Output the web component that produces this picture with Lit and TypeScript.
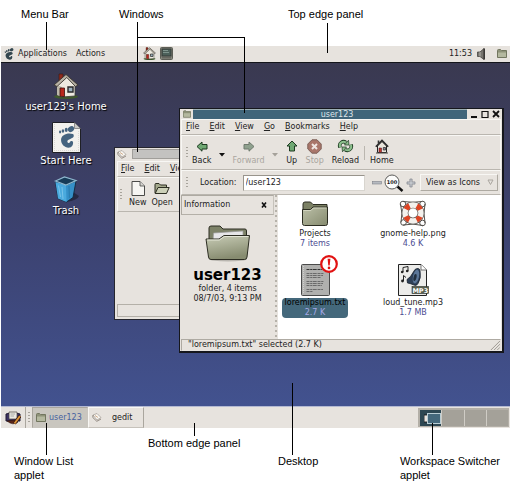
import { LitElement, html, css, nothing } from "lit";
import { customElement, property } from "lit/decorators.js";
import { classMap } from "lit/directives/class-map.js";

const reset = css`
  * { box-sizing: border-box; }
  button, input, select { font: inherit; color: inherit; background: none; border: 0; padding: 0; margin: 0; border-radius: 0; white-space: nowrap; }
  svg { display: block; flex: none; }
  u { text-decoration: underline; text-underline-offset: 1px; }
`;

const foot = (size: number, h: number, fill: string) => html`<svg width=${size} height=${h} viewBox="0 0 20 26">
  <g fill=${fill}>
    <ellipse cx="15.6" cy="3.8" rx="4" ry="3.4" transform="rotate(-30 15.6 3.8)"/>
    <ellipse cx="9.4" cy="5" rx="1.9" ry="2.8" transform="rotate(10 9.4 5)"/>
    <ellipse cx="5.3" cy="6.8" rx="1.6" ry="2.3"/>
    <ellipse cx="2" cy="9" rx="1.3" ry="1.9" transform="rotate(-14 2 9)"/>
    <path d="M17 9.5C11 7.500 2.500 10 2.500 16.500C2.500 21.500 7 25.500 11.500 25.500C16 25.500 17.800 21.500 17 18.500C16.400 17 14 17.300 13.400 18.800C13 20.300 10.700 20.500 10.200 18.500C9.600 15.500 17.800 15 18 11.800C18 10.500 17.700 9.800 17 9.500Z"/>
  </g></svg>`;

const house = (w: number, h: number) => html`<svg width=${w} height=${h} viewBox="0 0 26 26">
  <ellipse cx="13" cy="23.600" rx="12" ry="2.400" fill="#3f5a2c"/>
  <path d="M6 1h4v8H6z" fill="#8e2a1c" stroke="#3a1712" stroke-width=".6"/>
  <path d="M4 11L14 2L22 11V23L9 24L4 22Z" fill="#eeeae0" stroke="#3b3a36" stroke-width=".8"/>
  <path d="M4 12L9 14V24L4 22Z" fill="#bdb8aa"/>
  <path d="M1 12L13 1.500L25 12L22.500 13.500L13.800 4.500L4 13.500Z" fill="#b9b3a6" stroke="#38332e" stroke-width=".9"/>
  <path d="M7 15h4.500v8.600L7 23.300z" fill="#b8271c" stroke="#3b120e" stroke-width=".8"/>
  <path d="M15 14h5v5h-5z" fill="#9bb0bd" stroke="#282828" stroke-width="1.400"/>
</svg>`;

const smallFolder = (w = 10, h = 9) => html`<svg width=${w} height=${h} viewBox="0 0 10 9">
  <path d="M.5 1.500Q.5.5 1.500.5H3.500L4.500 1.500H9.500V8.500H.5Z" fill="#8e9279" stroke="#72765f"/>
  <path d="M1 3.500H9V8H1Z" fill="#b4b89f"/></svg>`;

const folder = html`<svg width="28" height="26" viewBox="0 0 28 26">
  <path d="M2 3Q2 1 4 1H9.500L12 3.500H26V14H2Z" fill="#7b8064" stroke="#2c2d22"/>
  <path d="M1.500 8.500H9.500L12 6H26.500V22.500Q26.500 24.500 24.500 24.500H3.500Q1.500 24.500 1.500 22.500Z" fill="url(#fg)" stroke="#2c2d22"/>
  <path d="M2.500 9.500H10L12.500 7H25.500" fill="none" stroke="#d9dcc8" stroke-width=".8"/>
  <defs><linearGradient id="fg" x1="0" y1="0" x2="1" y2="1"><stop stop-color="#bcc0a8"/><stop offset="1" stop-color="#858a6e"/></linearGradient></defs></svg>`;

const bigFolder = html`<svg width="46" height="37" viewBox="0 0 46 37">
  <ellipse cx="23" cy="34" rx="19" ry="2.500" fill="#b9b6b0"/>
  <path d="M4 3Q4 1 6 1H15L18 4H40Q41.500 4 41.500 6V15H4Z" fill="#7d8268" stroke="#2c2d22"/>
  <path d="M8.500 8L38 6V17H8Z" fill="#e6e6e8" stroke="#9a9a98" stroke-width=".7"/>
  <path d="M1 14H14L19 10.500H44.500L42 32Q41.800 34.500 39.500 34.500H6Q3.800 34.500 3.500 32Z" fill="url(#bg)" stroke="#2c2d22"/>
  <path d="M2.200 15H14.400L19.400 11.500H43.300" fill="none" stroke="#e3e5d6"/>
  <defs><linearGradient id="bg" x1="0" y1="0" x2=".3" y2="1"><stop stop-color="#c8ccb6"/><stop offset="1" stop-color="#878c70"/></linearGradient></defs></svg>`;

const terminal = html`<svg width="13" height="13" viewBox="0 0 13 13">
  <rect x=".5" y=".5" width="12" height="12" rx="1" fill="#85867c" stroke="#5d5e56"/>
  <rect x="2" y="2" width="9" height="7" fill="#4c605a" stroke="#343a37"/>
  <path d="M3 3.500H8M3 5.500H9" stroke="#8ba199" stroke-width=".8"/>
  <path d="M2 10.800H11" stroke="#5a5b55"/></svg>`;

const speaker = html`<svg width="9" height="12" viewBox="0 0 9 12">
  <path d="M.5 4H3L7 .5V11.500L3 8.500H.5Z" fill="#77756f" stroke="#45433f" stroke-width=".8"/>
  <path d="M7.300.5V11.500" stroke="#2e2c2a" stroke-width="1.200"/><path d="M3 4V8.500" stroke="#c9c6bf" stroke-width=".8"/></svg>`;

const startDoc = html`<svg width="29" height="31" viewBox="0 0 29 31">
  <path d="M.5.5H22.500L28.500 6.500V30.500H.5Z" fill="#f3f2ee" stroke="#1f2026"/>
  <path d="M22.500.5V6.500H28.500" fill="#c9c9c6" stroke="#6b6b6b" stroke-width=".7"/>
  <path d="M2.500 2V29.500M26.500 9V29.500M2 28.500H27" stroke="#cfcfca" stroke-width=".7" stroke-dasharray="1 1"/>
  <g transform="translate(7 4) scale(.82 .85)" fill="#45647f">
    <ellipse cx="14.600" cy="3.600" rx="4" ry="3.200" transform="rotate(-30 14.600 3.600)"/><ellipse cx="8.800" cy="4.600" rx="1.800" ry="2.500"/>
    <ellipse cx="4.800" cy="5.800" rx="1.600" ry="2.100"/><ellipse cx="1.300" cy="7" rx="1.300" ry="1.700"/>
    <path d="M17 9.500C11 7.500 2.500 10 2.500 16.500C2.500 21.500 7 25.500 11.500 25.500C16 25.500 17.800 21.500 17 18.500C16.400 17 14 17.300 13.400 18.800C13 20.300 10.700 20.500 10.200 18.500C9.600 15.500 17.800 15 18 11.800C18 10.500 17.700 9.800 17 9.500Z"/></g></svg>`;

const trash = html`<svg width="30" height="27" viewBox="0 0 30 27">
  <path d="M19 14L28 20Q27 24 15 26Z" fill="#1d1f33" opacity=".7"/>
  <path d="M4.500 6L7 22.500L15.500 26L22 21.500L25 5L15 9Z" fill="#3590c8" stroke="#12283c" stroke-width=".9"/>
  <path d="M15 9L15.500 26L7 22.500L4.500 6Z" fill="#4aaade"/>
  <path d="M7.500 9.500L9.500 21M11 11L12 23" stroke="#78c4ea" stroke-width="1"/>
  <path d="M4.500 5L13.500 1L25 4.500L15 9Z" fill="#173c58" stroke="#8fb9cf" stroke-width="1.200"/>
  <path d="M18 10L18.500 22" stroke="#2a7fb3" stroke-width="1.300"/></svg>`;

const pencilPad = html`<svg width="10" height="9" viewBox="0 0 10 9">
  <path d="M1 2L5 .5L9 4.500L5 7Z" fill="#f7f5f0" stroke="#9d978f" stroke-width=".7"/>
  <path d="M1 2L.8 4.500L4.800 8.300L9 6" fill="none" stroke="#7d756c" stroke-width=".8"/><path d="M3 2.500L6 4.500" stroke="#c59a75" stroke-width=".8"/></svg>`;

const arrow = (dim: boolean) => html`<svg width="12" height="11" viewBox="0 0 12 11">
  <path d="M1 5.500L6 1V3.500H11V8H6V10.200Z" transform=${dim ? "matrix(-1 0 0 1 12 0)" : "translate(0 0)"}
    fill=${dim ? "#8fa18e" : "#6fa873"} stroke=${dim ? "#6f7a6e" : "#1d3a20"}/></svg>`;

const upArrow = html`<svg width="12" height="12" viewBox="0 0 12 12"><path d="M6 1L11 6H8.500V11H3.500V6H1Z" fill="#6fa873" stroke="#1d3a20"/></svg>`;

const stop = html`<svg width="15" height="15" viewBox="0 0 15 15">
  <path d="M5 .8H10L14.200 5V10L10 14.200H5L.8 10V5Z" fill="#a9766a" stroke="#7e6159"/><path d="M5 5L10 10M10 5L5 10" stroke="#efe6e2" stroke-width="2"/></svg>`;

const reload = html`<svg width="17" height="14" viewBox="0 0 17 14">
  <g fill="none"><path d="M3 8.500C1.500 3.500 6 1.500 9 3.500" stroke="#1d3a20" stroke-width="3.600"/><path d="M14 5.500C15.500 10.500 11 12.500 8 10.500" stroke="#1d3a20" stroke-width="3.600"/>
  <path d="M3 8.200C1.700 3.500 6 1.500 9 3.500" stroke="#8cc08d" stroke-width="2"/><path d="M14 5.800C15.300 10.500 11 12.500 8 10.500" stroke="#8cc08d" stroke-width="2"/></g>
  <path d="M7.500 6L12 6L11.500 1.200Z" fill="#8cc08d" stroke="#1d3a20" stroke-width=".7"/><path d="M9.500 8L5 8L5.500 12.800Z" fill="#8cc08d" stroke="#1d3a20" stroke-width=".7"/></svg>`;

const homeIcon = html`<svg width="14" height="15" viewBox="0 0 14 15">
  <path d="M2.500 7L7 2.500L11.500 7V13.500H2.500Z" fill="#e9e5dc" stroke="#242424"/>
  <path d="M.8 7.800L7 1.500L13.200 7.800" fill="none" stroke="#2b2b2b" stroke-width="1.600"/><path d="M3.500 1.500V4.500" stroke="#333" stroke-width="1.600"/>
  <path d="M4 9H6.500V13.500H4Z" fill="#c03a26" stroke="#402" stroke-width=".5"/><path d="M8.300 8.500H10.500V11H8.300Z" fill="#889" stroke="#333" stroke-width=".8"/>
  <path d="M1 14H13" stroke="#4a4a42"/></svg>`;

const newDoc = html`<svg width="14" height="15" viewBox="0 0 14 15"><path d="M1 .5H9L13.500 5V14.500H1Z" fill="#f6f5f2" stroke="#4a4a48"/><path d="M9 .5V5H13.500" fill="#d5d4d0" stroke="#4a4a48" stroke-width=".8"/></svg>`;
const openIcon = html`<svg width="16" height="15" viewBox="0 0 16 15"><path d="M1 3.500Q1 2.500 2 2.500H5L6.500 4H12.500V12H1Z" fill="#a4a98c" stroke="#2c2d22"/><path d="M4 6.500H15.200L12.500 12.500H1.200Z" fill="#ccd0b8" stroke="#2c2d22"/></svg>`;

const magnifier = html`<svg width="20" height="18" viewBox="0 0 20 18">
  <path d="M13.500 12.500L18.500 17" stroke="#111" stroke-width="2.400"/><circle cx="8" cy="8" r="7" fill="#fbfbfa" stroke="#5c5c5a"/>
  <text x="8" y="10" text-anchor="middle" font-size="5" font-weight="bold" font-family="DejaVu Sans" fill="#222">100</text></svg>`;
const minus = html`<svg width="10" height="10" viewBox="0 0 10 10"><rect x=".5" y="3.500" width="9" height="2.500" fill="#b6bac0" stroke="#7f838b" stroke-width=".6"/></svg>`;
const plus = html`<svg width="10" height="10" viewBox="0 0 10 10"><path d="M3.900 1H6.100V3.900H9V6.100H6.100V9H3.900V6.100H1V3.900H3.900Z" fill="#c2c6cb" stroke="#7f838b" stroke-width=".7"/></svg>`;

const lifebuoy = html`<svg width="28" height="27" viewBox="0 0 28 27">
  <g fill="none" stroke="#56534e" stroke-width="1"><circle cx="4" cy="4" r="2.800"/><circle cx="23.500" cy="4" r="2.800"/><circle cx="4.500" cy="22.500" r="2.800"/><circle cx="23.500" cy="23" r="2.800"/><path d="M4 1.500Q14 3 23.500 1.500M4 25Q14 23 24 25.500M1.500 4Q4 13 2 22.500M26 4Q24 13 26 23"/></g>
  <circle cx="14" cy="13" r="8" fill="none" stroke="#403c38" stroke-width="6.600"/>
  <circle cx="14" cy="13" r="8" fill="none" stroke="#f3f1ed" stroke-width="5.400"/>
  <circle cx="14" cy="13" r="8" fill="none" stroke="#dd4424" stroke-width="5.400" stroke-dasharray="5 7.566" transform="rotate(27 14 13)"/></svg>`;

const textDoc = html`<svg width="29" height="32" viewBox="0 0 29 32">
  <rect x=".5" y=".5" width="28" height="31" rx="1" fill="#b0b0ae" stroke="#4a4a4a"/><path d="M2.500 2V30" stroke="#cfcfcd" stroke-dasharray="1 1"/>
  <g stroke="#6a6a6a" stroke-dasharray="3 .7 2 .5 4 .8"><path d="M5.500 5.500H21" stroke="#333"/><path d="M5.500 9.500H23M5.500 11.500H22M5.500 13.500H20M5.500 17.500H23M5.500 19.500H22M5.500 21.500H21M5.500 25.500H22M5.500 27.500H12"/></g></svg>`;

const audioDoc = html`<svg width="31" height="32" viewBox="0 0 31 32">
  <path d="M.5.5H23L28.500 6V31.500H.5Z" fill="#ececea" stroke="#222"/><path d="M23 .5V6H28.500" fill="#fff" stroke="#555" stroke-width=".8"/>
  <path d="M5 8V3.500L10 2.500V7" fill="none" stroke="#222"/><circle cx="4.200" cy="8" r="1.300" fill="#222"/><circle cx="9.200" cy="7" r="1.300" fill="#222"/>
  <path d="M5.500 17V11.500L8 13.500" fill="none" stroke="#222"/><circle cx="4.500" cy="17" r="1.400" fill="#222"/>
  <path d="M17 5.500Q21 3 22 6.500Q23.500 14 20 19.500Q18.500 22.500 16 21L12 19.500L9.500 19L9 15.500L12.500 12.500Z" fill="#2e4058" stroke="#17202c" stroke-width=".8"/>
  <ellipse cx="18" cy="12.500" rx="3" ry="7" transform="rotate(12 18 12.500)" fill="#5b7698"/><ellipse cx="17" cy="13.500" rx="1.500" ry="3.500" transform="rotate(12 17 13.500)" fill="#22303f"/>
  <rect x="14" y="22.500" width="16.500" height="7" fill="#5a6150" stroke="#2c3028" stroke-width=".6"/>
  <text x="22.300" y="28.600" text-anchor="middle" font-size="6.500" font-weight="bold" font-family="DejaVu Sans" fill="#fff">MP3</text></svg>`;

const emblem = html`<svg width="18" height="18" viewBox="0 0 18 18"><circle cx="9" cy="9" r="7.800" fill="#fff" stroke="#e11212" stroke-width="2.200"/><path d="M7.600 3.800H10.400L9.700 10.500H8.300Z" fill="#e11212"/><circle cx="9" cy="12.900" r="1.300" fill="#e11212"/></svg>`;

const deskIcon = html`<svg width="16" height="14" viewBox="0 0 16 14">
  <path d="M1 3Q8 0 15 3V10H1Z" fill="#3c3264" stroke="#201a33"/><path d="M4 1H12V8H4Z" fill="#ece9e2" stroke="#4a4640" stroke-width=".7"/><path d="M5.500 3H10M5.500 5H9" stroke="#999" stroke-width=".8"/>
  <path d="M2 10Q8 15 13 11L10 9Z" fill="#5a2418" stroke="#2b120e" stroke-width=".6"/><path d="M15 5L9.500 12.500" stroke="#2b120e" stroke-width="3"/><path d="M15 5L9.500 12.500" stroke="#dc9238" stroke-width="2"/></svg>`;

const windowCss = css`
  .bar { border: 1px solid; border-color: #f8f7f4 #f8f7f4 #bab6af #f8f7f4; display: flex; align-items: center; }
  .grip { flex: none; width: 2px; height: 12px; margin-right: 2px; background: repeating-linear-gradient(#a8a49c 0 1px, transparent 1px 3px); }
  .menus { gap: 10px; height: 16px; padding: 0 4px; }
  .tool { display: flex; flex-direction: column; align-items: center; line-height: 12px; }
  .tool .pic { height: 16px; display: flex; align-items: center; justify-content: center; margin-bottom: 1px; }
  .tool:disabled { color: #aaa69f; }
  .title { display: flex; align-items: stretch; height: 10px; }
  .title .app { width: 12px; display: flex; align-items: center; justify-content: center; }
`;

@customElement("editor-window")
class EditorWindow extends LitElement {
  static styles = [reset, windowCss, css`
    :host { display: flex; flex-direction: column; background: #e7e3de; border: 1px solid #26262e; padding: 1px 0 2px 2px; overflow: hidden; min-height: 173px; }
    .title { margin-bottom: 2px; }
    .title .app { width: 15px; justify-content: flex-start; }
    .fill { flex: 1; background: #c3c2c0; border: 1px solid #a09e9a; }
    .bar { flex: none; }
    .menus { padding: 0 3px; }
    .tools { height: 35px; padding-left: 2px; gap: 5px; }
    .page { flex: 1; }
    .status { height: 13px; border: 1px solid #b4b0a8; }
  `];
  render() {
    return html`
      <div class="title"><span class="app">${pencilPad}</span><span class="fill"></span></div>
      <div class="bar menus"><button><u>F</u>ile</button><button><u>E</u>dit</button><button><u>V</u>iew</button></div>
      <div class="bar tools"><span class="grip"></span>
        <button class="tool"><span class="pic">${newDoc}</span>New</button>
        <button class="tool"><span class="pic">${openIcon}</span>Open</button>
      </div>
      <div class="page"></div>
      <div class="status"></div>`;
  }
}

interface FileItem { name: string; note: string; pic: unknown; selected?: boolean; }

@customElement("file-window")
class FileWindow extends LitElement {
  @property({ attribute: false }) files: FileItem[] = [
    { name: "Projects", note: "7 items", pic: folder },
    { name: "gnome-help.png", note: "4.6 K", pic: lifebuoy },
    { name: "loremipsum.txt", note: "2.7 K", pic: textDoc, selected: true },
    { name: "loud_tune.mp3", note: "1.7 MB", pic: audioDoc },
  ];
  static styles = [reset, windowCss, css`
    :host { display: flex; flex-direction: column; background: #e7e3de; border: 1px solid #16171c; border-right-width: 2px; border-bottom-width: 2px; padding: 0 1px 0 1px; }
    .caption { flex: 1; background: #40657a; border-top: 1px solid #9db0b4; color: #dfe6ea; text-align: center; line-height: 10px; padding-left: 14px; }
    .ctl { width: 11px; display: flex; align-items: center; justify-content: center; }
    .controls { display: flex; padding-left: 1px; }
    .tools { height: 35px; padding-left: 4px; }
    .tools .grip { margin-right: 4px; }
    .drop { width: 21px; height: 24px; display: flex; align-items: center; justify-content: center; padding-top: 4px; }
    .plain { display: flex; gap: 8px; align-items: center; }
    .sep { width: 1px; height: 14px; background: #bab6af; margin: 0 5px; }
    .place { height: 25px; padding: 0 2px 0 4px; }
    .place label { margin: 0 6px 0 10px; }
    .place input { flex: 1; min-width: 40px; height: 16px; background: #fff; border: 1px solid; border-color: #98948c #d8d5cf #d8d5cf #98948c; padding: 0 2px; }
    .zoom { display: flex; align-items: center; gap: 2px; margin: 0 4px 0 7px; }
    .view { position: relative; }
    .view select { appearance: none; width: 78px; height: 17px; padding-left: 5px; border: 1px solid; border-color: #f8f7f4 #aeaaa2 #aeaaa2 #f8f7f4; }
    .view svg { position: absolute; right: 4px; top: 5px; pointer-events: none; }
    .body { display: grid; grid-template-columns: 93px 4px 1fr; min-height: 144px; }
    .info { display: flex; flex-direction: column; align-items: center; line-height: 10px; }
    .head { align-self: stretch; display: flex; justify-content: space-between; align-items: center; height: 20px; padding: 0 6px 0 2px; border: 1px solid; border-color: #aeaaa2 #c6c2bb #b4b0a8 #aeaaa2; margin-bottom: 10px; }
    h1 { font-size: 15px; line-height: 18px; margin: 4px 0 0; color: #000; }
    .split { margin: 0 1px; background: repeating-linear-gradient(#b6b2aa 0 2px, transparent 2px 5px); }
    .files { background: #fff; display: grid; grid-template-columns: repeat(auto-fill, 74px); grid-auto-rows: 54px; gap: 15px 24px; align-content: start; }
    .file { position: relative; display: flex; flex-direction: column; align-items: center; line-height: 10px; }
    .pic34 { height: 34px; display: flex; align-items: flex-end; padding-bottom: 2px; }
    .label { padding: 0 3px; border-radius: 4px; display: flex; flex-direction: column; align-items: center; }
    .note { color: #4c4c92; }
    .selected .label { background: #44687b; color: #000; height: 21px; }
    .selected .note { color: #a6a8e6; }
    .emblem { position: absolute; right: 14px; top: -9px; }
    .status { display: flex; justify-content: space-between; align-items: flex-end; height: 12px; line-height: 11px; padding-left: 6px; border: 1px solid; border-color: #aeaaa2 #e7e3de #e7e3de #aeaaa2; }
  `];
  render() {
    const drop = (c: string) => html`<svg width="6" height="4" viewBox="0 0 6 4"><path d="M0 0H6L3 3.500Z" fill=${c}/></svg>`;
    return html`
      <div class="title"><span class="app">${smallFolder(8, 8)}</span><span class="caption">user123</span>
        <span class="controls">
          <button class="ctl" aria-label="Minimize"><svg width="8" height="8"><path d="M1 7H7" stroke="#111" stroke-width="2"/></svg></button>
          <button class="ctl" aria-label="Maximize"><svg width="8" height="8"><path d="M1 1.500H7V7.500H1Z" fill="none" stroke="#111" stroke-width="1.200"/></svg></button>
          <button class="ctl" aria-label="Close"><svg width="8" height="8"><path d="M1 1L7 7M7 1L1 7" stroke="#111" stroke-width="1.800"/></svg></button>
        </span></div>
      <div class="bar menus">
        <button><u>F</u>ile</button><button><u>E</u>dit</button><button><u>V</u>iew</button><button><u>G</u>o</button><button><u>B</u>ookmarks</button><button><u>H</u>elp</button>
      </div>
      <div class="bar tools"><span class="grip"></span>
        <button class="tool"><span class="pic">${arrow(false)}</span>Back</button><button class="drop" aria-label="Back history">${drop("#111")}</button>
        <button class="tool" disabled><span class="pic">${arrow(true)}</span>Forward</button><button class="drop" disabled aria-label="Forward history">${drop("#a5a19a")}</button>
        <span class="plain">
          <button class="tool"><span class="pic">${upArrow}</span>Up</button>
          <button class="tool" disabled><span class="pic">${stop}</span>Stop</button>
          <button class="tool"><span class="pic">${reload}</span>Reload</button>
        </span>
        <span class="sep"></span>
        <button class="tool"><span class="pic">${homeIcon}</span>Home</button>
      </div>
      <div class="bar place"><span class="grip"></span>
        <label for="loc">Location:</label><input id="loc" type="text" .value=${"/user123"}>
        <span class="zoom"><button aria-label="Zoom out">${minus}</button><button aria-label="Normal size">${magnifier}</button><button aria-label="Zoom in">${plus}</button></span>
        <span class="view"><select aria-label="View"><option>View as Icons</option><option>View as List</option></select>
          <svg width="7" height="7" viewBox="0 0 7 7"><path d="M1 1H6L3.500 5.500Z" fill="none" stroke="#aaa69f"/></svg></span>
      </div>
      <div class="body">
        <div class="info">
          <div class="head"><span>Information</span><button aria-label="Close side pane"><svg width="6" height="6"><path d="M1 .5L5 5.500M5 .5L1 5.500" stroke="#111" stroke-width="1.600"/></svg></button></div>
          ${bigFolder}
          <h1>user123</h1><span>folder, 4 items</span><span>08/7/03, 9:13 PM</span>
        </div>
        <div class="split"></div>
        <div class="files">${this.files.map(f => html`
          <div class=${classMap({ file: true, selected: !!f.selected })}>
            <span class="pic34">${f.pic}</span>${f.selected ? html`<span class="emblem">${emblem}</span>` : nothing}
            <span class="label"><span>${f.name}</span><span class="note">${f.note}</span></span>
          </div>`)}</div>
      </div>
      <div class="status"><span>"loremipsum.txt" selected (2.7 K)</span>
        <svg width="10" height="10" viewBox="0 0 11 11"><path d="M1 11L11 1M4.500 11L11 4.500M8 11L11 8" stroke="#98948c"/></svg></div>`;
  }
}

@customElement("app-root")
class AppRoot extends LitElement {
  static styles = [reset, css`
    :host { display: block; position: relative; background: #fff; padding: 46px 1px 59px; color: #222; font: 8px/12px "DejaVu Sans", sans-serif; }
    .top { display: flex; align-items: center; height: 17px; background: #e7e3de; border-bottom: 1px solid #14151a; padding: 0 3px 1px 3px; }
    .top .menu { margin-left: 4px; }
    .top .menu + .menu { margin-left: 9px; }
    .launch { display: flex; gap: 4px; margin-left: 38px; }
    .tray { display: flex; align-items: center; margin-left: auto; }
    .tray svg { margin-left: 5px; }
    .tray svg + svg { margin-left: 11px; }
    .desktop { position: relative; min-height: 343px; background: linear-gradient(#3a3950, #3c4270 50%, #42528f); padding: 10px 0 0 15px; }
    .shortcuts { display: flex; flex-direction: column; gap: 7px; width: 100px; }
    .shortcut { display: flex; flex-direction: column; align-items: center; font-size: 10px; line-height: 16px; color: #fff; text-shadow: 1px 1px 1px #000; }
    editor-window { position: absolute; left: 113px; right: 200px; top: 84px; }
    file-window { position: absolute; left: 178px; right: 6px; top: 45px; }
    .bottom { display: flex; align-items: stretch; height: 22px; background: #e7e3de; border-top: 1px solid #b3b9d2; }
    .show { width: 25px; display: flex; align-items: center; justify-content: center; border-right: 1px solid #aaa69e; }
    .grip { width: 2px; margin: 5px 2px; background: repeating-linear-gradient(#a8a49c 0 1px, transparent 1px 3px); }
    .task { display: flex; align-items: center; width: 56px; padding-left: 3px; gap: 3px; border: 1px solid; border-color: #f8f7f4 #aaa69e #c6c2bb #f8f7f4; }
    .task.on { background: #c9c6bf; color: #4762a0; border-color: #aaa69e #c9c6bf #c9c6bf #aaa69e; }
    .task.app { gap: 10px; }
    .spaces { display: grid; grid-template-columns: repeat(4, 1fr); gap: 1px; width: 91px; height: 19px; margin: 1px 1px 1px auto; background: #cfccc5; border: 2px solid #b3afa7; border-width: 2px 1px 1px 2px; }
    .space { background: #a4a199; display: flex; align-items: center; justify-content: flex-end; }
    .space.on { background: #2d4752; }
    .note { position: absolute; font: 11px/14px "Liberation Sans", Arial, sans-serif; color: #000; white-space: nowrap; }
    .rule { position: absolute; background: #000; width: 1px; }
    .n-menu { left: 21px; top: 7px; } .r-menu { left: 46px; top: 22px; height: 28px; }
    .n-win { left: 119px; top: 7px; } .r-win { left: 137px; top: 22px; height: 130px; }
    .r-across { left: 137px; top: 37px; width: 108px; height: 1px; } .r-win2 { left: 244px; top: 37px; height: 76px; }
    .n-top { left: 288px; top: 7px; } .r-top { left: 327px; top: 23px; height: 30px; }
    .n-list { left: 14px; bottom: 5px; } .r-list { left: 46px; bottom: 32px; height: 32px; }
    .n-bottom { left: 148px; bottom: 37px; } .r-bottom { left: 194px; bottom: 51px; height: 13px; }
    .n-desk { left: 278px; bottom: 19px; } .r-desk { left: 292px; bottom: 32px; height: 72px; }
    .n-space { right: 11px; bottom: 5px; } .r-space { right: 78px; bottom: 32px; height: 32px; }
  `];
  render() {
    return html`
      <nav class="top">${foot(10, 12, "#33464f")}
        <button class="menu">Applications</button><button class="menu">Actions</button>
        <span class="launch"><button aria-label="Home">${house(13, 13)}</button><button aria-label="Terminal">${terminal}</button></span>
        <span class="tray"><time>11:53</time>${speaker}${smallFolder(10, 9)}</span>
      </nav>
      <main class="desktop">
        <div class="shortcuts">
          <button class="shortcut">${house(26, 26)}user123's Home</button>
          <button class="shortcut">${startDoc}Start Here</button>
          <button class="shortcut">${trash}Trash</button>
        </div>
        <editor-window></editor-window>
        <file-window></file-window>
      </main>
      <footer class="bottom">
        <button class="show" aria-label="Show desktop">${deskIcon}</button><span class="grip"></span>
        <button class="task on">${smallFolder(10, 9)}user123</button>
        <button class="task app">${pencilPad}gedit</button>
        <div class="spaces"><span class="space on"><svg width="17" height="11" viewBox="0 0 17 11"><rect x="0" y="2" width="5" height="7" fill="#e7e3de" stroke="#111" stroke-width=".8"/><rect x="3.500" y=".5" width="13" height="10" fill="#44687b" stroke="#b9cdd4"/></svg></span><span class="space"></span><span class="space"></span><span class="space"></span></div>
      </footer>
      <span class="note n-menu">Menu Bar</span><span class="rule r-menu"></span>
      <span class="note n-win">Windows</span><span class="rule r-win"></span><span class="rule r-across"></span><span class="rule r-win2"></span>
      <span class="note n-top">Top edge panel</span><span class="rule r-top"></span>
      <span class="note n-list">Window List<br>applet</span><span class="rule r-list"></span>
      <span class="note n-bottom">Bottom edge panel</span><span class="rule r-bottom"></span>
      <span class="note n-desk">Desktop</span><span class="rule r-desk"></span>
      <span class="note n-space">Workspace Switcher<br>applet</span><span class="rule r-space"></span>`;
  }
}
